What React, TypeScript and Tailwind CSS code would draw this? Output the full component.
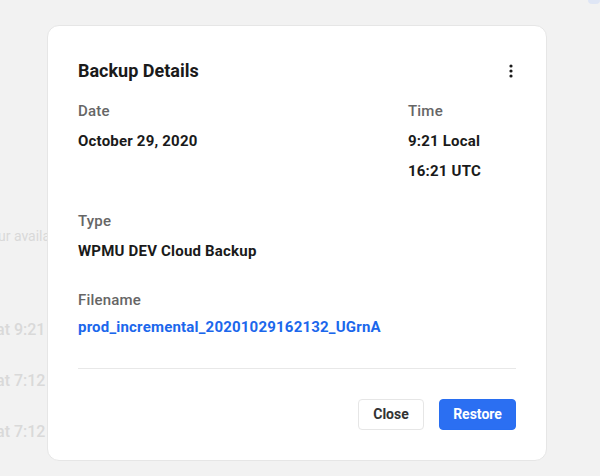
import React from "react";

export default function App() {
  return (
    <div
      className="relative w-[600px] h-[476px] overflow-hidden bg-[#f2f2f2]"
      style={{ fontFamily: "Roboto, 'Liberation Sans', sans-serif" }}
    >
      {/* background page */}
      <div className="flex flex-col pt-[226px] text-[#d9d9d9]">
        <div className="ml-[-18px] text-[14px] leading-[20px] whitespace-nowrap">Your availa</div>
        <div className="mt-[72px] flex flex-col gap-[27px] text-[16px] font-medium leading-[24px] whitespace-nowrap">
          <div className="ml-[-4px]">at 9:21</div>
          <div className="ml-[-4px]">at 7:12</div>
          <div className="ml-[-4px]">at 7:12</div>
        </div>
      </div>
      <div className="absolute right-0 top-[-6px] w-[12px] h-[10px] rounded-[4px] bg-[#dfe6f5]" />

      {/* modal */}
      <div className="absolute left-[47px] top-[25px] w-[500px] rounded-[12px] border border-[#e6e6e6] bg-white px-[30px] pt-[30px] pb-[30px]">
        <div className="flex h-[30px] items-center justify-between">
          <h2 className="text-[18px] font-bold leading-[30px] text-[#1a1a1a]">Backup Details</h2>
          <svg width="10" height="16" viewBox="0 0 10 16">
            <circle cx="5" cy="3" r="1.6" fill="#1a1a1a" />
            <circle cx="5" cy="8" r="1.6" fill="#1a1a1a" />
            <circle cx="5" cy="13" r="1.6" fill="#1a1a1a" />
          </svg>
        </div>

        <div className="mt-[10px] grid grid-cols-[330px_1fr] text-[15px] leading-[30px] tracking-[0.2px]">
          <div className="flex flex-col">
            <span className="font-medium text-[#666666]">Date</span>
            <span className="font-bold text-[#1a1a1a]">October 29, 2020</span>
          </div>
          <div className="flex flex-col">
            <span className="font-medium text-[#666666]">Time</span>
            <span className="font-bold text-[#1a1a1a]">9:21 Local</span>
            <span className="font-bold text-[#1a1a1a]">16:21 UTC</span>
          </div>
        </div>

        <div className="mt-[20px] flex flex-col text-[15px] leading-[30px] tracking-[0.2px]">
          <span className="font-medium text-[#666666]">Type</span>
          <span className="font-bold text-[#1a1a1a]">WPMU DEV Cloud Backup</span>
        </div>

        <div className="mt-[19px] flex flex-col text-[15px] tracking-[0.2px]">
          <span className="font-medium leading-[30px] text-[#666666]">Filename</span>
          <a className="font-bold leading-[24px] text-[#1b67ec]">prod_incremental_20201029162132_UGrnA</a>
        </div>

        <div className="mt-[29px] h-px bg-[#e8e8e8]" />

        <div className="mt-[30px] flex justify-end gap-[15px]">
          <button className="h-[31px] w-[66px] rounded-[4px] border border-[#e6e6e6] bg-white text-[14px] font-bold text-[#333333]">
            Close
          </button>
          <button className="h-[31px] w-[77px] rounded-[4px] border border-[#286ef1] bg-[#2b6ff2] text-[14px] font-bold text-white">
            Restore
          </button>
        </div>
      </div>
    </div>
  );
}
